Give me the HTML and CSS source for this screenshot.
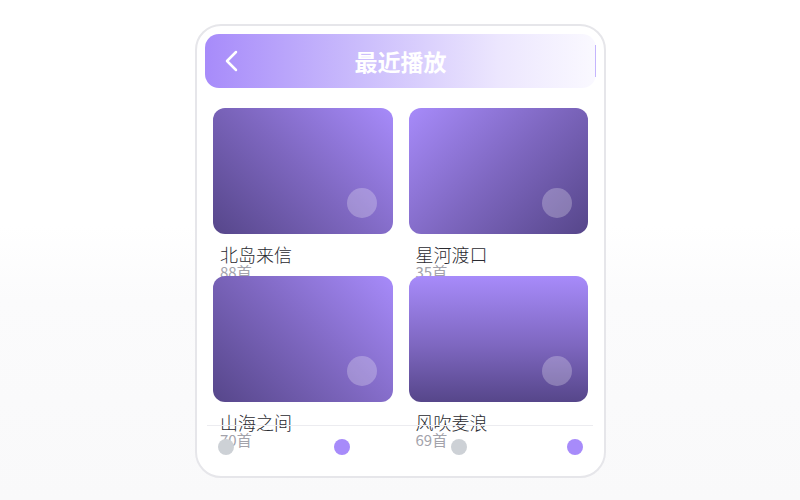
FILE: index.html
```html
<!DOCTYPE html>
<html lang="zh-CN">
<head>
<meta charset="utf-8">
<title>最近播放</title>
<link rel="stylesheet" href="styles.css">
</head>
<body>
<div class="phone">
  <header class="topbar">
    <button class="back" aria-label="返回">
      <svg width="14" height="22" viewBox="0 0 14 22"><polyline points="12,2 3,11 12,20" fill="none" stroke="#fff" stroke-width="2.5" stroke-linecap="round" stroke-linejoin="round"/></svg>
    </button>
    <h1 class="title">最近播放</h1>
    <span class="spacer"></span>
  </header>
  <main class="grid">
    <article class="item">
      <div class="cover cover-a"><span class="play"></span></div>
      <div class="name">北岛来信</div>
      <div class="count">88首</div>
    </article>
    <article class="item">
      <div class="cover cover-b"><span class="play"></span></div>
      <div class="name">星河渡口</div>
      <div class="count">35首</div>
    </article>
    <article class="item">
      <div class="cover cover-a"><span class="play"></span></div>
      <div class="name">山海之间</div>
      <div class="count">70首</div>
    </article>
    <article class="item">
      <div class="cover cover-c"><span class="play"></span></div>
      <div class="name">风吹麦浪</div>
      <div class="count">69首</div>
    </article>
  </main>
  <nav class="tabbar">
    <span class="dot dot-gray"></span>
    <span class="dot dot-purple"></span>
    <span class="dot dot-gray"></span>
    <span class="dot dot-purple"></span>
  </nav>
</div>
</body>
</html>
```

FILE: styles.css
```css
* { box-sizing: border-box; }
html, body { margin: 0; height: 100%; }
body {
  background: linear-gradient(180deg, #ffffff 0%, #ffffff 45%, #fbfbfc 60%, #f9f9fa 100%);
  font-family: "Noto Sans CJK SC", "Noto Sans", sans-serif;
  padding-top: 24px;
}
.phone {
  position: relative;
  width: 411px;
  height: 454px;
  margin: 0 0 0 195px;
  background: #fff;
  border: 2px solid #e6e6ea;
  border-radius: 26px;
  padding: 8px;
  overflow: hidden;
}
.topbar {
  position: relative;
  height: 54px;
  border-radius: 14px;
  background: linear-gradient(90deg, #a78bfa 0%, #cbbdfc 40%, #ece6fe 75%, #faf9ff 100%);
  display: grid;
  grid-template-columns: 1fr auto 1fr;
  align-items: center;
  padding: 0 19px;
}
.topbar::after {
  content: "";
  position: absolute;
  right: 0;
  top: 11px;
  bottom: 11px;
  width: 1px;
  background: #c4b5fd;
}
.back {
  justify-self: start;
  background: none;
  border: 0;
  padding: 0;
  width: 14px;
  height: 22px;
  display: flex;
}
.title {
  margin: 0;
  color: #fff;
  font-size: 23px;
  font-weight: 700;
  line-height: 1;
}
.grid {
  margin-top: 20px;
  padding: 0 8px;
  display: grid;
  grid-template-columns: 1fr 1fr;
  grid-auto-rows: 160px;
  column-gap: 16px;
  row-gap: 8px;
}
.item { min-width: 0; }
.cover {
  position: relative;
  height: 126px;
  border-radius: 12px;
}
.cover-a { background: linear-gradient(225deg, #a78bfa 0%, #7e67c0 50%, #56468a 100%); }
.cover-b { background: linear-gradient(135deg, #a78bfa 0%, #7e67c0 50%, #56468a 100%); }
.cover-c { background: linear-gradient(180deg, #a78bfa 0%, #7e67c0 55%, #56468a 100%); }
.play {
  position: absolute;
  right: 16px;
  bottom: 16px;
  width: 30px;
  height: 30px;
  border-radius: 50%;
  background: rgba(255, 255, 255, 0.25);
}
.name {
  margin-top: 10px;
  padding: 0 7px;
  font-size: 18px;
  font-weight: 300;
  line-height: 20px;
  color: #2a2a30;
}
.count {
  padding: 0 7px;
  font-size: 15px;
  line-height: 15px;
  color: #a3a3ab;
}
.tabbar {
  position: absolute;
  left: 10px;
  right: 11px;
  bottom: 0;
  height: 51px;
  border-top: 1px solid #ececf0;
  padding: 13px 10px 0 11px;
  display: flex;
  justify-content: space-between;
  align-items: flex-start;
}
.dot {
  width: 16px;
  height: 16px;
  border-radius: 50%;
}
.dot-gray { background: #cdd1d6; }
.dot-purple { background: #a78bfa; }
```
